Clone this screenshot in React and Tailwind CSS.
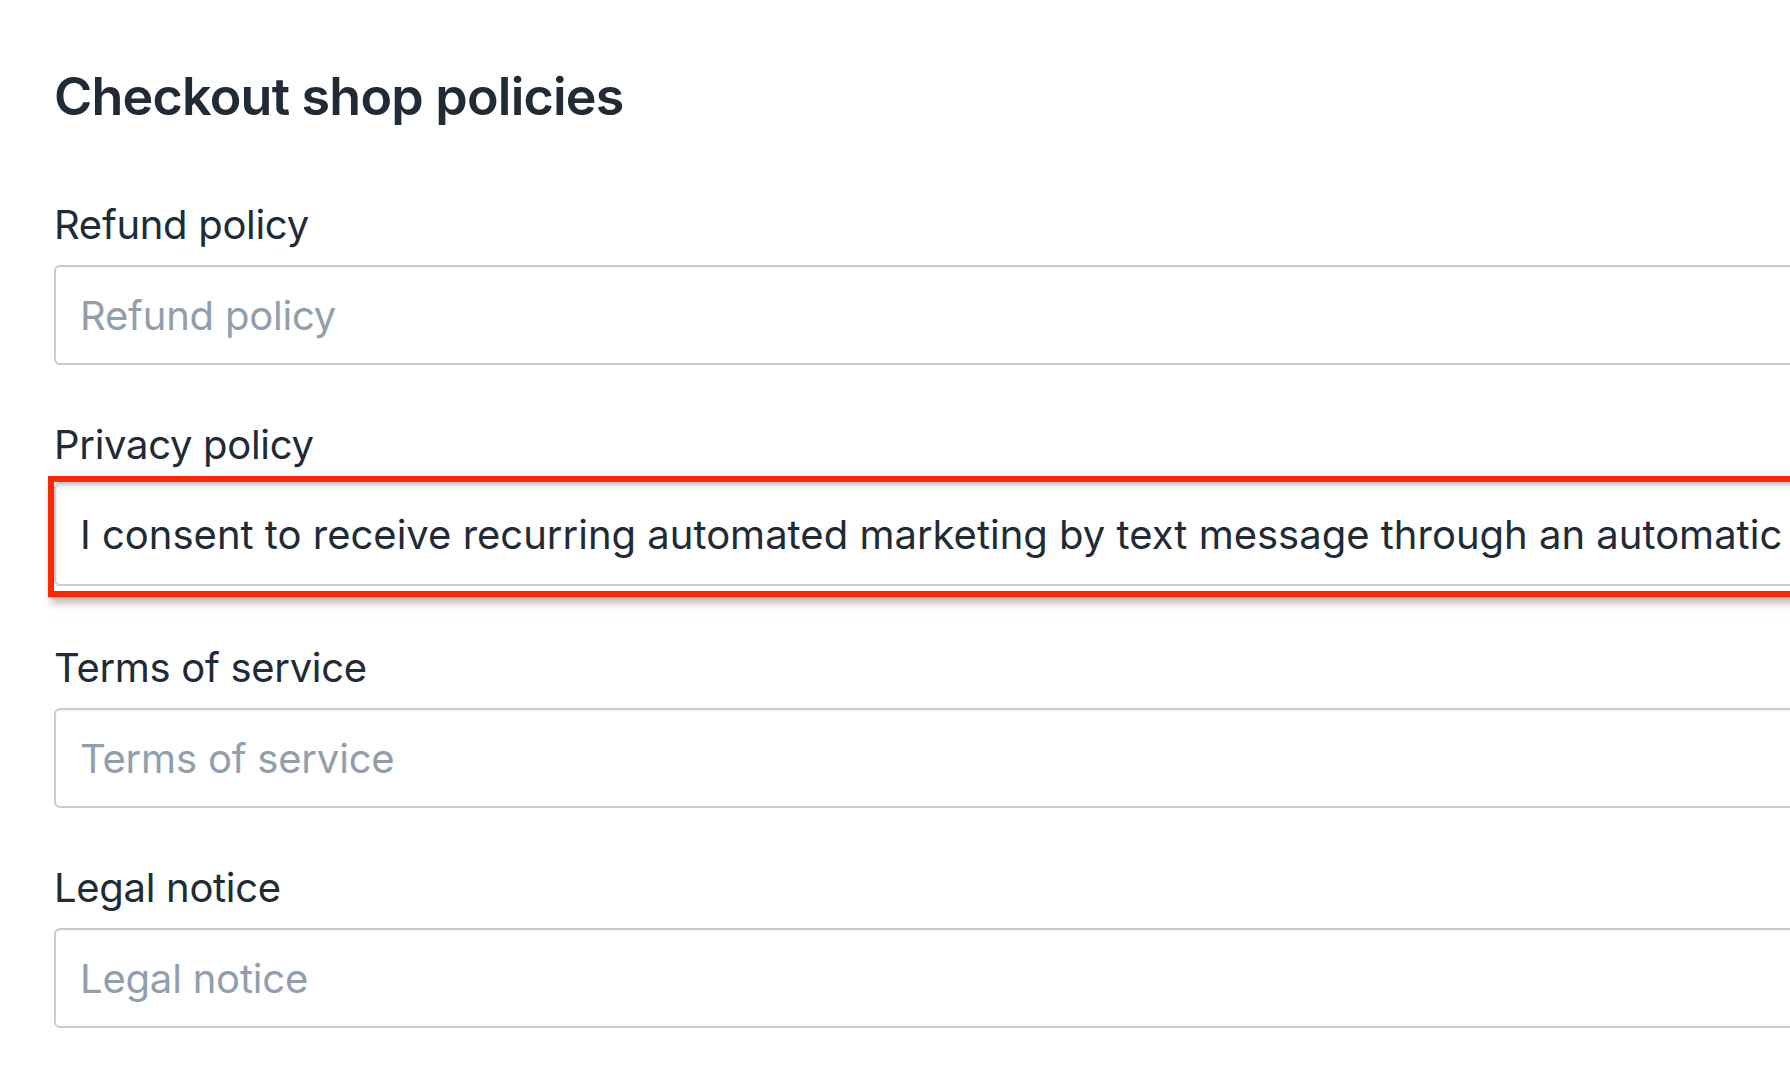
import React from 'react';

const fields = [
  { id: 'refund', label: 'Refund policy' },
  {
    id: 'privacy',
    label: 'Privacy policy',
    value:
      'I consent to receive recurring automated marketing by text message through an automatic telephone dialing system. Consent is not a condition to purchase.',
    highlighted: true,
  },
  { id: 'terms', label: 'Terms of service' },
  { id: 'legal', label: 'Legal notice' },
];

function PolicyField({ field }) {
  const input = (
    <input
      id={`policy-${field.id}`}
      type="text"
      readOnly
      placeholder={field.label}
      defaultValue={field.value}
      className={`block w-[1900px] rounded-[6px] border-2 border-[#c4cdd5] bg-white pl-[24px] pr-[23px] text-[40px] text-[#212b36] placeholder:text-[#919eab] placeholder:tracking-[-0.2px] outline-none
        ${field.highlighted ? 'h-[104px] shadow-[inset_0_2px_3px_rgba(0,0,0,0.18)]' : 'h-[100px] shadow-[inset_0_1px_2px_rgba(0,0,0,0.06)]'}`}
    />
  );

  return (
    <div className="flex flex-col">
      <label htmlFor={`policy-${field.id}`} className="mb-[16px] text-[40px] leading-[48px] tracking-[-0.3px] text-[#212b36]">
        {field.label}
      </label>
      {field.highlighted ? (
        // red callout box drawn round the focused field
        <div className="-ml-[6px] -mt-[9px] -mb-[9px] w-[1920px] border-[6px] border-[#ff2600] pb-[5px] shadow-[3px_6px_8px_rgba(0,0,0,0.28)]">
          {input}
        </div>
      ) : (
        input
      )}
    </div>
  );
}

export default function App() {
  return (
    <div className="min-h-screen w-screen overflow-hidden bg-white font-['Inter',sans-serif]">
      <div className="pl-[54px] pt-[71px]">
        <h1 className="text-[52px] font-semibold leading-none tracking-[-0.015em] text-[#212b36]">
          Checkout shop policies
        </h1>

        <div className="mt-[78px] flex flex-col gap-[56px]">
          {fields.map((field) => (
            <PolicyField key={field.id} field={field} />
          ))}
        </div>
      </div>
    </div>
  );
}
